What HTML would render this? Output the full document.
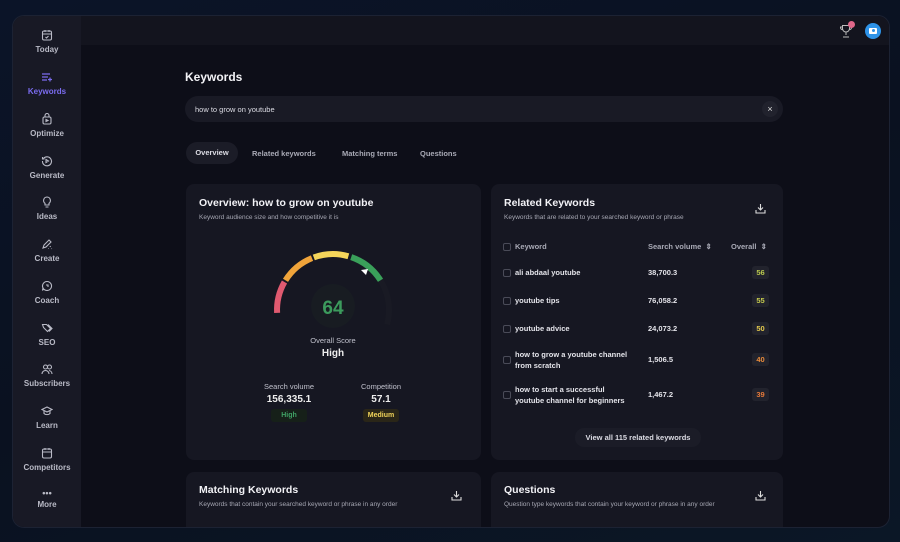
<!DOCTYPE html>
<html><head><meta charset="utf-8"><style>
*{box-sizing:border-box;margin:0;padding:0}
body{width:900px;height:542px;overflow:hidden;background:linear-gradient(160deg,#0b1428 0%,#0a1120 50%,#0b1726 100%);font-family:"Liberation Sans",sans-serif;color:#e8e8ee;position:relative}
.win{position:absolute;left:12px;top:15px;width:878px;height:513px;border-radius:12px;background:#0d0e18;overflow:hidden;border:1px solid #1c2233}
.side{position:absolute;left:0;top:0;width:68px;height:100%;background:#181925}
.top{position:absolute;left:68px;top:0;right:0;height:29px;background:#13141e}
.nav{position:absolute;left:0;width:68px;text-align:center;font-size:8px;font-weight:bold;color:#b9bac6}
.nav svg{display:block;margin:0 auto 4px;width:12px;height:12px}
.nav.act{color:#7b6cf0}
.card{position:absolute;background:#161722;border-radius:8px}
.h{font-size:10.5px;font-weight:bold;color:#f2f2f6}
.s{font-size:6.5px;color:#a6a7b3;margin-top:5px}
.abs{position:absolute}
.cb{position:absolute;width:8px;height:8px;border:1px solid #4a4b58;border-radius:2px}
.row{position:absolute;font-size:7.5px;font-weight:bold;color:#e4e4ea;line-height:11px}
.sc{position:absolute;width:17px;height:13px;border-radius:3px;background:#22232d;font-size:7.5px;font-weight:bold;text-align:center;line-height:13px}
</style></head><body>
<div class="win">
<div class="side">
 <div class="nav" style="top:13px"><svg viewBox="0 0 12 12" fill="none" stroke="#b9bac6" stroke-width="1.1"><rect x="1.5" y="2" width="9" height="9" rx="1.5"/><path d="M1.5 5h9M4 1v2M8 1v2M4.5 8l1 1 2-2"/></svg>Today</div>
 <div class="nav act" style="top:55px"><svg viewBox="0 0 12 12" fill="none" stroke="#7b6cf0" stroke-width="1.2"><path d="M1 3h8M1 6h6M1 9h5M9 6.5v4M7 8.5h4"/></svg>Keywords</div>
 <div class="nav" style="top:97px"><svg viewBox="0 0 12 12" fill="none" stroke="#b9bac6" stroke-width="1.1"><rect x="2" y="4" width="8" height="7" rx="1.5"/><path d="M4 4V2.5a2 2 0 014 0V4M5 6.5l2 1-2 1z"/></svg>Optimize</div>
 <div class="nav" style="top:139px"><svg viewBox="0 0 12 12" fill="none" stroke="#b9bac6" stroke-width="1.1"><path d="M2.5 3.5A4.5 4.5 0 111.5 6M1.5 2v2h2M5 4.5l2.5 1.5L5 7.5z"/></svg>Generate</div>
 <div class="nav" style="top:180px"><svg viewBox="0 0 12 12" fill="none" stroke="#b9bac6" stroke-width="1.1"><path d="M6 1a3.5 3.5 0 00-2 6.3V9h4V7.3A3.5 3.5 0 006 1zM4.5 11h3"/></svg>Ideas</div>
 <div class="nav" style="top:222px"><svg viewBox="0 0 12 12" fill="none" stroke="#b9bac6" stroke-width="1.1"><path d="M2 10l1-3 5-5 2 2-5 5zM9 8l.5 1M10.5 10.5l.3.3M7 10.5h.5"/></svg>Create</div>
 <div class="nav" style="top:264px"><svg viewBox="0 0 12 12" fill="none" stroke="#b9bac6" stroke-width="1.1"><path d="M6 1.5a4.5 4.5 0 11-3.5 7.3L1.5 10.5 2 8A4.5 4.5 0 016 1.5zM5 5h2v2"/></svg>Coach</div>
 <div class="nav" style="top:306px"><svg viewBox="0 0 12 12" fill="none" stroke="#b9bac6" stroke-width="1.1"><path d="M1.5 2.5h4l4 4-3 3-4-4zM7 2.5l4 4-3 3"/></svg>SEO</div>
 <div class="nav" style="top:347px"><svg viewBox="0 0 12 12" fill="none" stroke="#b9bac6" stroke-width="1.1"><circle cx="4.5" cy="4" r="2"/><circle cx="8.5" cy="4" r="2"/><path d="M1 11a3.5 3.5 0 017 0M8 7.5a3.5 3.5 0 013 3.5"/></svg>Subscribers</div>
 <div class="nav" style="top:389px"><svg viewBox="0 0 12 12" fill="none" stroke="#b9bac6" stroke-width="1.1"><path d="M1 4.5L6 2l5 2.5L6 7zM3 5.5v3c1.5 1.5 4.5 1.5 6 0v-3"/></svg>Learn</div>
 <div class="nav" style="top:431px"><svg viewBox="0 0 12 12" fill="none" stroke="#b9bac6" stroke-width="1.1"><rect x="1.5" y="2" width="9" height="9" rx="1.5"/><path d="M1.5 5h9M4 1v2M8 1v2"/></svg>Competitors</div>
 <div class="nav" style="top:474px"><div style="font-size:9px;line-height:6px;margin-bottom:4px;letter-spacing:0">•••</div>More</div>
</div>
<div class="top"></div>
<svg class="abs" style="left:826px;top:8px" width="14" height="14" viewBox="0 0 14 14" fill="none" stroke="#bbb" stroke-width="1"><path d="M3.5 1.5h7v3a3.5 3.5 0 01-7 0zM7 8v3M4 13h6M3.5 3H1.5a2 2 0 002 2.5M10.5 3h2a2 2 0 01-2 2.5"/></svg>
<div class="abs" style="left:835px;top:5px;width:7px;height:7px;border-radius:50%;background:#e0678a"></div>
<div class="abs" style="left:852px;top:7px;width:16px;height:16px;border-radius:50%;background:#2e93e8"><div style="position:absolute;left:4px;top:5px;width:8px;height:6px;background:#fff;border-radius:1px"></div><div style="position:absolute;left:7px;top:6px;width:3px;height:3px;background:#2e93e8;border-radius:50%"></div></div>

<div class="abs h" style="left:172px;top:54px;font-size:12px">Keywords</div>
<div class="abs" style="left:172px;top:80px;width:598px;height:26px;border-radius:13px;background:#191a25;font-size:7.5px;color:#dcdce4;padding:9px 0 0 10px">how to grow on youtube</div>
<div class="abs" style="left:749px;top:85px;width:16px;height:16px;border-radius:50%;background:#21222d;color:#ddd;font-size:9px;text-align:center;line-height:16px">×</div>
<div class="abs" style="left:173px;top:126px;width:52px;height:22px;border-radius:11px;background:#1b1c27;font-size:7.5px;font-weight:bold;color:#dcdce4;text-align:center;line-height:22px">Overview</div>
<div class="abs" style="left:239px;top:133px;font-size:7.5px;font-weight:bold;color:#a9aab6">Related keywords</div>
<div class="abs" style="left:329px;top:133px;font-size:7.5px;font-weight:bold;color:#a9aab6">Matching terms</div>
<div class="abs" style="left:407px;top:133px;font-size:7.5px;font-weight:bold;color:#a9aab6">Questions</div>

<div class="card" style="left:173px;top:168px;width:295px;height:276px;padding:13px">
 <div class="h">Overview: how to grow on youtube</div>
 <div class="s">Keyword audience size and how competitive it is</div>
</div>
<svg class="abs" style="left:0;top:0" width="878" height="513" viewBox="12 15 878 513">
 <g fill="none" stroke-width="6" stroke-linecap="butt">
  <path d="M379.5 279.3 A56 56 0 0 1 386.1 323.5" stroke="#191a24"/>
  <path d="M276.1 311.9 A56 56 0 0 1 283.5 281" stroke="#e05a70"/>
  <path d="M284.5 279.3 A56 56 0 0 1 311 257.1" stroke="#f0a43a"/>
  <path d="M312.8 256.4 A56 56 0 0 1 347.4 255.2" stroke="#f5d55a"/>
  <path d="M350.2 256.1 A56 56 0 0 1 379.5 279.3" stroke="#3aa05a"/>
 </g>
 <path d="M360 269l7-1-2 6z" fill="#fff"/>
 <circle cx="332" cy="305" r="22" fill="#181c22"/>
 <text x="332" y="313" text-anchor="middle" font-family="Liberation Sans" font-weight="bold" font-size="19" fill="#3c9b5d">64</text>
</svg>
<div class="abs" style="left:260px;top:320px;width:120px;text-align:center;font-size:7.5px;color:#c0c1cc">Overall Score</div>
<div class="abs" style="left:260px;top:332px;width:120px;text-align:center;font-size:10px;font-weight:bold;color:#eee">High</div>
<div class="abs" style="left:236px;top:366px;width:80px;text-align:center;font-size:7.5px;color:#c0c1cc">Search volume</div>
<div class="abs" style="left:236px;top:378px;width:80px;text-align:center;font-size:10px;font-weight:bold;color:#eee">156,335.1</div>
<div class="abs" style="left:258px;top:393px;width:36px;height:13px;border-radius:3px;background:#162019;text-align:center;line-height:13px;font-size:7px;font-weight:bold;color:#3fa064">High</div>
<div class="abs" style="left:328px;top:366px;width:80px;text-align:center;font-size:7.5px;color:#c0c1cc">Competition</div>
<div class="abs" style="left:328px;top:378px;width:80px;text-align:center;font-size:10px;font-weight:bold;color:#eee">57.1</div>
<div class="abs" style="left:350px;top:393px;width:36px;height:13px;border-radius:3px;background:#2a2618;text-align:center;line-height:13px;font-size:7px;font-weight:bold;color:#f1d45a">Medium</div>

<div class="card" style="left:478px;top:168px;width:292px;height:276px;padding:13px">
 <div class="h">Related Keywords</div>
 <div class="s">Keywords that are related to your searched keyword or phrase</div>
</div>
<svg class="abs" style="left:742px;top:187px" width="11" height="11" viewBox="0 0 11 11" fill="none" stroke="#ddd" stroke-width="1.1"><path d="M5.5 1v5.5M3 4.5l2.5 2.5L8 4.5M1 7v3h9V7"/></svg>
<div class="cb" style="left:490px;top:227px"></div>
<div class="abs" style="left:502px;top:226px;font-size:7.5px;font-weight:bold;color:#a9aab6">Keyword</div>
<div class="abs" style="left:635px;top:226px;font-size:7.5px;font-weight:bold;color:#a9aab6">Search volume &nbsp;⇕</div>
<div class="abs" style="left:718px;top:226px;font-size:7.5px;font-weight:bold;color:#a9aab6">Overall &nbsp;⇕</div>

<div class="cb" style="left:490px;top:253px"></div><div class="row" style="left:502px;top:251px">ali abdaal youtube</div><div class="row" style="left:635px;top:251px">38,700.3</div><div class="sc" style="left:739px;top:250px;color:#b9c84e">56</div>
<div class="cb" style="left:490px;top:281px"></div><div class="row" style="left:502px;top:279px">youtube tips</div><div class="row" style="left:635px;top:279px">76,058.2</div><div class="sc" style="left:739px;top:278px;color:#c6cb4e">55</div>
<div class="cb" style="left:490px;top:309px"></div><div class="row" style="left:502px;top:307px">youtube advice</div><div class="row" style="left:635px;top:307px">24,073.2</div><div class="sc" style="left:739px;top:306px;color:#e3c94e">50</div>
<div class="cb" style="left:490px;top:340px"></div><div class="row" style="left:502px;top:333px">how to grow a youtube channel<br>from scratch</div><div class="row" style="left:635px;top:338px">1,506.5</div><div class="sc" style="left:739px;top:337px;color:#e88a3a">40</div>
<div class="cb" style="left:490px;top:375px"></div><div class="row" style="left:502px;top:368px">how to start a successful<br>youtube channel for beginners</div><div class="row" style="left:635px;top:373px">1,467.2</div><div class="sc" style="left:739px;top:372px;color:#e5793a">39</div>
<div class="abs" style="left:562px;top:412px;width:126px;height:19px;border-radius:9px;background:#1b1c27;text-align:center;line-height:19px;font-size:7.5px;font-weight:bold;color:#dcdce4">View all 115 related keywords</div>

<div class="card" style="left:173px;top:456px;width:295px;height:70px;padding:12px 13px">
 <div class="h">Matching Keywords</div>
 <div class="s">Keywords that contain your searched keyword or phrase in any order</div>
</div>
<svg class="abs" style="left:438px;top:474px" width="11" height="11" viewBox="0 0 11 11" fill="none" stroke="#ddd" stroke-width="1.1"><path d="M5.5 1v5.5M3 4.5l2.5 2.5L8 4.5M1 7v3h9V7"/></svg>
<div class="card" style="left:478px;top:456px;width:292px;height:70px;padding:12px 13px">
 <div class="h">Questions</div>
 <div class="s">Question type keywords that contain your keyword or phrase in any order</div>
</div>
<svg class="abs" style="left:742px;top:474px" width="11" height="11" viewBox="0 0 11 11" fill="none" stroke="#ddd" stroke-width="1.1"><path d="M5.5 1v5.5M3 4.5l2.5 2.5L8 4.5M1 7v3h9V7"/></svg>
</div>
</body></html>
